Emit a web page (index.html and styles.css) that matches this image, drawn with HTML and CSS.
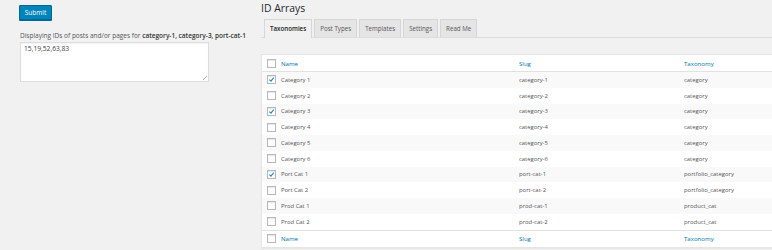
FILE: index.html
```html
<!DOCTYPE html>
<html>
<head>
<meta charset="utf-8">
<link rel="stylesheet" href="styles.css">
</head>
<body>
<div class="page">
  <div class="left">
    <button class="btn">Submit</button>
    <p class="desc">Displaying IDs of posts and/or pages for <b>category-1, category-3, port-cat-1</b></p>
    <div class="textarea">15,19,52,63,83<span class="grip"></span></div>
  </div>
  <div class="right">
    <h1 class="title">ID Arrays</h1>
    <div class="tabs">
      <span class="tab active">Taxonomies</span>
      <span class="tab">Post Types</span>
      <span class="tab">Templates</span>
      <span class="tab">Settings</span>
      <span class="tab">Read Me</span>
    </div>
    <div class="table">
      <div class="row head">
        <span class="cell chk"><span class="box"></span></span>
        <span class="cell link">Name</span>
        <span class="cell link">Slug</span>
        <span class="cell link">Taxonomy</span>
      </div>
      <div class="row alt">
        <span class="cell chk"><span class="box"><svg viewBox="0 0 10 10"><polyline points="2,5.2 4.2,7.4 8.2,2.4"/></svg></span></span>
        <span class="cell">Category 1</span><span class="cell">category-1</span><span class="cell">category</span>
      </div>
      <div class="row">
        <span class="cell chk"><span class="box"></span></span>
        <span class="cell">Category 2</span><span class="cell">category-2</span><span class="cell">category</span>
      </div>
      <div class="row alt">
        <span class="cell chk"><span class="box"><svg viewBox="0 0 10 10"><polyline points="2,5.2 4.2,7.4 8.2,2.4"/></svg></span></span>
        <span class="cell">Category 3</span><span class="cell">category-3</span><span class="cell">category</span>
      </div>
      <div class="row">
        <span class="cell chk"><span class="box"></span></span>
        <span class="cell">Category 4</span><span class="cell">category-4</span><span class="cell">category</span>
      </div>
      <div class="row alt">
        <span class="cell chk"><span class="box"></span></span>
        <span class="cell">Category 5</span><span class="cell">category-5</span><span class="cell">category</span>
      </div>
      <div class="row">
        <span class="cell chk"><span class="box"></span></span>
        <span class="cell">Category 6</span><span class="cell">category-6</span><span class="cell">category</span>
      </div>
      <div class="row alt">
        <span class="cell chk"><span class="box"><svg viewBox="0 0 10 10"><polyline points="2,5.2 4.2,7.4 8.2,2.4"/></svg></span></span>
        <span class="cell">Port Cat 1</span><span class="cell">port-cat-1</span><span class="cell">portfolio_category</span>
      </div>
      <div class="row">
        <span class="cell chk"><span class="box"></span></span>
        <span class="cell">Port Cat 2</span><span class="cell">port-cat-2</span><span class="cell">portfolio_category</span>
      </div>
      <div class="row alt">
        <span class="cell chk"><span class="box"></span></span>
        <span class="cell">Prod Cat 1</span><span class="cell">prod-cat-1</span><span class="cell">product_cat</span>
      </div>
      <div class="row">
        <span class="cell chk"><span class="box"></span></span>
        <span class="cell">Prod Cat 2</span><span class="cell">prod-cat-2</span><span class="cell">product_cat</span>
      </div>
      <div class="row foot">
        <span class="cell chk"><span class="box"></span></span>
        <span class="cell link">Name</span>
        <span class="cell link">Slug</span>
        <span class="cell link">Taxonomy</span>
      </div>
    </div>
  </div>
</div>
</body>
</html>
```

FILE: styles.css
```css
html, body {
  margin: 0;
  padding: 0;
  background: #f1f1f1;
  font-family: "Open Sans", "DejaVu Sans", sans-serif;
  color: #555;
  overflow: hidden;
}
.page {
  display: flex;
  width: 772px;
  height: 250px;
}
.left {
  width: 261px;
  padding-left: 19px;
  padding-top: 5px;
  box-sizing: border-box;
  flex: none;
}
.btn {
  display: block;
  width: 33px;
  height: 15px;
  padding: 0;
  margin: 0;
  border: 1px solid #006799;
  border-radius: 1px;
  background: #0085ba;
  color: #fff;
  font-family: inherit;
  font-size: 6.5px;
  line-height: 13px;
  box-shadow: 0 1px 0 #006799;
}
.desc {
  margin: 12px 0 0 1px;
  font-size: 6.5px;
  line-height: 8px;
  color: #555;
  white-space: nowrap;
}
.desc b {
  font-weight: 600;
  color: #333;
}
.textarea {
  position: relative;
  margin: 2px 0 0 1px;
  width: 189px;
  height: 40px;
  box-sizing: border-box;
  background: #fff;
  border: 1px solid #ddd;
  box-shadow: inset 0 1px 1px rgba(0,0,0,0.05);
  font-size: 6.7px;
  line-height: 8px;
  padding: 2px 3px;
  color: #444;
}
.grip {
  position: absolute;
  right: 1px;
  bottom: 1px;
  width: 4px;
  height: 4px;
  background: linear-gradient(135deg, transparent 50%, #aaa 50%, #aaa 62%, transparent 62%);
}
.right {
  flex: 1;
  min-width: 0;
}
.title {
  margin: 0;
  padding-top: 2px;
  font-size: 10.4px;
  line-height: 13px;
  font-weight: 400;
  color: #23282d;
}
.tabs {
  display: flex;
  margin-top: 4px;
  padding-left: 3px;
  gap: 2px;
  border-bottom: 1px solid #ddd;
  height: 18px;
  align-items: flex-end;
}
.tab {
  height: 18px;
  box-sizing: border-box;
  border: 1px solid #d6d6d6;
  border-bottom: none;
  background: #e5e5e5;
  font-size: 6.2px;
  line-height: 17px;
  padding: 0 5px;
  font-weight: 400;
  color: #555;
  margin-bottom: 0;
}
.tab.active {
  background: #f1f1f1;
  color: #222;
  font-weight: 600;
  height: 19px;
  margin-bottom: -1px;
}
.table {
  margin-top: 16px;
  background: #fff;
  border: 1px solid #e5e5e5;
  border-right: none;
  box-shadow: 0 1px 1px rgba(0,0,0,0.04);
}
.row {
  display: grid;
  grid-template-columns: 15px 238px 165px 1fr;
  height: 15.75px;
  align-items: center;
  font-size: 5.9px;
}
.row.alt {
  background: #f9f9f9;
}
.row.head {
  height: 16px;
  border-bottom: 1px solid #e1e1e1;
}
.row.foot {
  height: 16px;
  border-top: 1px solid #e1e1e1;
}
.cell {
  padding-left: 4px;
  white-space: nowrap;
  color: #555;
}
.cell.link {
  color: #0073aa;
  font-size: 6.1px;
}
.cell.chk {
  padding-left: 5px;
  display: flex;
  align-items: center;
}
.box {
  display: block;
  width: 9px;
  height: 9px;
  box-sizing: border-box;
  border: 1px solid #b4b9be;
  background: #fff;
  box-shadow: inset 0 1px 1px rgba(0,0,0,0.1);
}
.box svg {
  display: block;
  width: 7px;
  height: 7px;
}
.box polyline {
  fill: none;
  stroke: #1e8cbe;
  stroke-width: 1.6;
}
```
